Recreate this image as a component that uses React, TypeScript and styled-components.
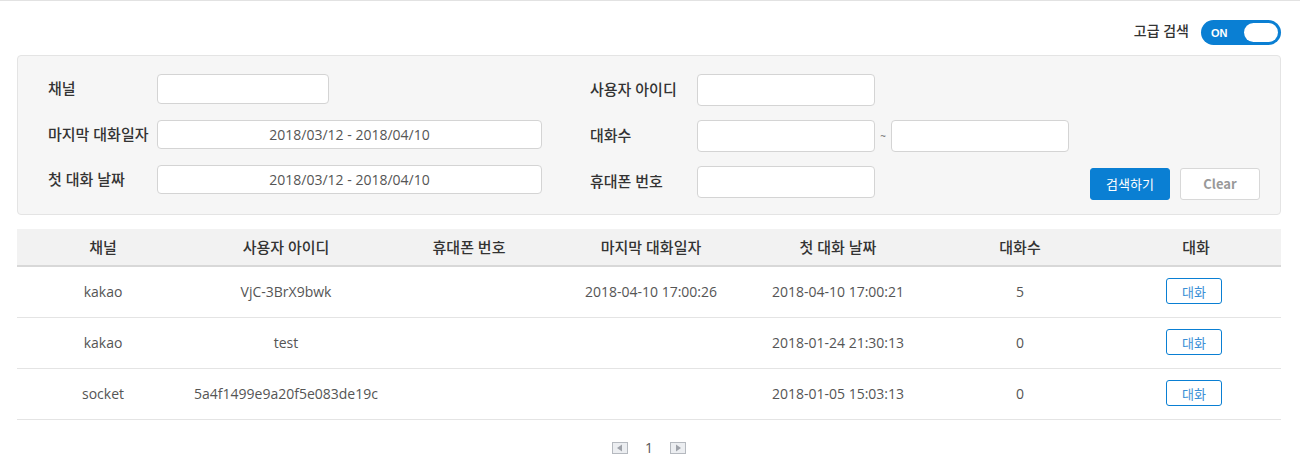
import React from "react";
import styled, { createGlobalStyle } from "styled-components";

const Global = createGlobalStyle`
  html, body { margin: 0; padding: 0; background: #fff; }
  body { font-family: "Open Sans", "Noto Sans CJK KR", sans-serif; color: #333; }
  * { box-sizing: border-box; }
`;

const Page = styled.div`
  border-top: 1px solid #e2e2e2;
  padding: 0 19px 0 17px;
  width: 1300px;
`;

const TopBar = styled.div`
  display: flex;
  justify-content: flex-end;
  align-items: center;
  gap: 12px;
  height: 54px;
  padding-top: 19px;
  padding-bottom: 10px;
`;

const TopLabel = styled.span`
  font-size: 14px;
  font-weight: 500;
  color: #333;
  margin-top: -6px;
`;

const Toggle = styled.div`
  position: relative;
  width: 80px;
  height: 25px;
  border-radius: 13px;
  background: #0a7fd3;
  display: flex;
  align-items: center;
  padding-left: 10px;
  color: #fff;
  font-family: "Liberation Sans", Arial, sans-serif;
  font-size: 11px;
  font-weight: 700;
`;

const Knob = styled.span`
  position: absolute;
  right: 3px;
  top: 3px;
  width: 34px;
  height: 19px;
  border-radius: 10px;
  background: #fff;
`;

const Panel = styled.div`
  background: #f6f6f6;
  border: 1px solid #e4e4e4;
  border-radius: 4px;
  height: 160px;
  display: grid;
  grid-template-columns: 542px 1fr;
  padding: 18px 20px 0 30px;
`;

const Col = styled.div<{ gap: number }>`
  display: flex;
  flex-direction: column;
  gap: ${(p) => p.gap}px;
`;

const Field = styled.div<{ h: number }>`
  display: flex;
  align-items: center;
  height: ${(p) => p.h}px;
`;

const Label = styled.label<{ w: number }>`
  width: ${(p) => p.w}px;
  font-size: 15px;
  font-weight: 500;
  color: #333;
  flex-shrink: 0;
  margin-top: -3px;
`;

const Input = styled.div<{ w: number; h: number }>`
  width: ${(p) => p.w}px;
  height: ${(p) => p.h}px;
  background: #fff;
  border: 1px solid #d4d4d4;
  border-radius: 4px;
  display: flex;
  align-items: center;
  justify-content: center;
  font-size: 14px;
  color: #555;
`;

const Tilde = styled.span`
  font-size: 10px;
  color: #666;
  width: 16px;
  text-align: center;
`;

const Spacer = styled.div`
  flex: 1;
`;

const Button = styled.button<{ primary?: boolean }>`
  width: 80px;
  height: 32px;
  border-radius: 3px;
  font-family: ${(p) => (p.primary ? "inherit" : '"Noto Sans CJK KR", sans-serif')};
  font-size: 13px;
  font-weight: ${(p) => (p.primary ? 400 : 700)};
  border: 1px solid ${(p) => (p.primary ? "#0a7fd3" : "#d8d8d8")};
  background: ${(p) => (p.primary ? "#0a7fd3" : "#fff")};
  color: ${(p) => (p.primary ? "#fff" : "#999")};
  padding: 0;
  margin-left: 10px;
  margin-top: 3px;
`;

const Table = styled.div`
  margin-top: 14px;
  width: 1264px;
`;

const cols = "172px 194px 172px 192px 182px 182px 170px";

const HeadRow = styled.div`
  display: grid;
  grid-template-columns: ${cols};
  height: 38px;
  background: #f2f2f2;
  border-bottom: 2px solid #d8d8d8;
`;

const Row = styled.div`
  display: grid;
  grid-template-columns: ${cols};
  height: 51px;
  border-bottom: 1px solid #e4e4e4;
`;

const Th = styled.div`
  display: flex;
  align-items: center;
  justify-content: center;
  font-size: 15px;
  font-weight: 500;
  color: #333;
  padding-bottom: 2px;
`;

const Td = styled.div<{ shift?: number }>`
  display: flex;
  align-items: center;
  justify-content: center;
  font-size: 14px;
  color: #555;
  padding-bottom: 2px;
  padding-right: ${(p) => p.shift ?? 0}px;
`;

const ChatBtn = styled.button`
  width: 56px;
  height: 26px;
  border: 1px solid #0a7fd3;
  border-radius: 3px;
  background: #fff;
  color: #3a8fd6;
  font-family: inherit;
  font-size: 13px;
  padding: 0;
`;

const Pager = styled.div`
  display: flex;
  justify-content: center;
  align-items: center;
  gap: 17px;
  height: 55px;
  font-size: 14px;
  color: #555;
`;

const Arrow = ({ dir }: { dir: "l" | "r" }) => (
  <svg width="16" height="12" viewBox="0 0 16 12">
    <rect x="0.5" y="0.5" width="15" height="11" fill="#eceef1" stroke="#b5b9bf" />
    {dir === "l" ? (
      <polygon points="10,2.5 10,9.5 5,6" fill="#9ea2a9" />
    ) : (
      <polygon points="6,2.5 6,9.5 11,6" fill="#9ea2a9" />
    )}
  </svg>
);

const rows = [
  ["kakao", "VjC-3BrX9bwk", "", "2018-04-10 17:00:26", "2018-04-10 17:00:21", "5"],
  ["kakao", "test", "", "", "2018-01-24 21:30:13", "0"],
  ["socket", "5a4f1499e9a20f5e083de19c", "", "", "2018-01-05 15:03:13", "0"],
];

const heads = ["채널", "사용자 아이디", "휴대폰 번호", "마지막 대화일자", "첫 대화 날짜", "대화수", "대화"];

export default function App() {
  return (
    <>
      <Global />
      <Page>
        <TopBar>
          <TopLabel>고급 검색</TopLabel>
          <Toggle>
            ON
            <Knob />
          </Toggle>
        </TopBar>
        <Panel>
          <Col gap={16}>
            <Field h={30}>
              <Label w={109}>채널</Label>
              <Input w={172} h={30} />
            </Field>
            <Field h={29}>
              <Label w={109}>마지막 대화일자</Label>
              <Input w={385} h={29}>2018/03/12 - 2018/04/10</Input>
            </Field>
            <Field h={29}>
              <Label w={109}>첫 대화 날짜</Label>
              <Input w={385} h={29}>2018/03/12 - 2018/04/10</Input>
            </Field>
          </Col>
          <Col gap={14}>
            <Field h={32}>
              <Label w={107}>사용자 아이디</Label>
              <Input w={178} h={32} />
            </Field>
            <Field h={32}>
              <Label w={107}>대화수</Label>
              <Input w={178} h={32} />
              <Tilde>~</Tilde>
              <Input w={178} h={32} />
            </Field>
            <Field h={32}>
              <Label w={107}>휴대폰 번호</Label>
              <Input w={178} h={32} />
              <Spacer />
              <Button primary>검색하기</Button>
              <Button>Clear</Button>
            </Field>
          </Col>
        </Panel>
        <Table>
          <HeadRow>
            {heads.map((h) => (
              <Th key={h}>{h}</Th>
            ))}
          </HeadRow>
          {rows.map((r, i) => (
            <Row key={i}>
              {r.map((c, j) => (
                <Td key={j}>{c}</Td>
              ))}
              <Td shift={4}>
                <ChatBtn>대화</ChatBtn>
              </Td>
            </Row>
          ))}
        </Table>
        <Pager>
          <Arrow dir="l" />
          <span>1</span>
          <Arrow dir="r" />
        </Pager>
      </Page>
    </>
  );
}
